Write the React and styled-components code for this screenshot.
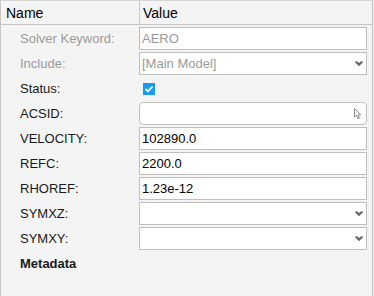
import React from "react";
import styled, { createGlobalStyle } from "styled-components";

const Global = createGlobalStyle`
  html, body { margin: 0; padding: 0; background: #f4f4f4; }
  body { font-family: "Liberation Sans", Arial, sans-serif; }
`;

const Panel = styled.div`
  box-sizing: border-box;
  width: 373px;
  height: 296px;
  background: #f4f4f4;
  border-left: 1px solid #c6c6c6;
  border-right: 1px solid #c0c0c0;
  border-top: 1px solid #d6d6d6;
  display: flex;
  flex-direction: column;
`;

const Header = styled.div`
  display: grid;
  grid-template-columns: 138px 1fr;
  height: 23px;
  border-bottom: 1px solid #c4c4c4;
`;

const HeaderCell = styled.div`
  display: flex;
  align-items: center;
  padding-left: ${(p) => p.$pad}px;
  font-size: 14px;
  color: #000;
  border-left: ${(p) => (p.$divider ? "1px solid #c8c8c8" : "none")};
`;

const Body = styled.div`
  display: grid;
  grid-template-columns: 138px 228px;
  grid-auto-rows: 23px;
  row-gap: 2px;
  padding-top: 2px;
`;

const Label = styled.div`
  display: flex;
  align-items: center;
  padding-left: 19px;
  font-size: 13px;
  font-weight: ${(p) => (p.$bold ? 700 : 400)};
  color: ${(p) => (p.$disabled ? "#9a9a9a" : "#1a1a1a")};
`;

const Field = styled.div`
  box-sizing: border-box;
  position: relative;
  height: 23px;
  background: #fff;
  border: 1px solid #bfbfbf;
  border-radius: ${(p) => (p.$rounded ? 4 : 0)}px;
  display: flex;
  align-items: center;
  padding-left: 2px;
  font-size: 13px;
  color: ${(p) => (p.$disabled ? "#9a9a9a" : "#000")};
`;

const FieldText = styled.span`
  flex: 1;
`;

const Adornment = styled.span`
  display: flex;
  align-items: center;
  margin-right: ${(p) => p.$mr}px;
`;

const CheckCell = styled.div`
  display: flex;
  align-items: center;
  padding-left: 4px;
`;

const Check = styled.div`
  width: 12px;
  height: 12px;
  background: #1a9be6;
  display: flex;
  align-items: center;
  justify-content: center;
`;

const Empty = styled.div``;

const Chevron = () => (
  <svg width="8" height="6" viewBox="0 0 8 6">
    <path d="M0.5 0.5 L4 4 L7.5 0.5" fill="none" stroke="#666" strokeWidth="1.6" />
    <path d="M2 1 L4 3 L6 1" fill="none" stroke="#666" strokeWidth="1.4" />
  </svg>
);

const Pointer = () => (
  <svg width="8" height="12" viewBox="0 0 8 12">
    <path
      d="M0.5 0.5 L0.5 9 L2.5 7.2 L4 10.8 L5.4 10.2 L4 6.8 L6.8 6.8 Z"
      fill="#fff"
      stroke="#8a8a8a"
      strokeWidth="1"
      strokeLinejoin="round"
    />
  </svg>
);

const Tick = () => (
  <svg width="10" height="8" viewBox="0 0 10 8">
    <path d="M1.5 4 L4 6.3 L8.5 1.5" fill="none" stroke="#fff" strokeWidth="1.8" />
  </svg>
);

const rows = [
  { label: "Solver Keyword:", disabled: true, type: "text", value: "AERO" },
  { label: "Include:", disabled: true, type: "select", value: "[Main Model]" },
  { label: "Status:", type: "check" },
  { label: "ACSID:", type: "picker", value: "" },
  { label: "VELOCITY:", type: "text", value: "102890.0" },
  { label: "REFC:", type: "text", value: "2200.0" },
  { label: "RHOREF:", type: "text", value: "1.23e-12" },
  { label: "SYMXZ:", type: "select", value: "" },
  { label: "SYMXY:", type: "select", value: "" },
];

function Value({ row }) {
  if (row.type === "check") {
    return (
      <CheckCell>
        <Check>
          <Tick />
        </Check>
      </CheckCell>
    );
  }
  return (
    <Field $disabled={row.disabled} $rounded={row.type === "picker"}>
      <FieldText>{row.value}</FieldText>
      {row.type === "select" && (
        <Adornment $mr={3}>
          <Chevron />
        </Adornment>
      )}
      {row.type === "picker" && (
        <Adornment $mr={4}>
          <Pointer />
        </Adornment>
      )}
    </Field>
  );
}

export default function App() {
  return (
    <>
      <Global />
      <Panel>
        <Header>
          <HeaderCell $pad={5}>Name</HeaderCell>
          <HeaderCell $pad={3} $divider>
            Value
          </HeaderCell>
        </Header>
        <Body>
          {rows.map((row) => (
            <React.Fragment key={row.label}>
              <Label $disabled={row.disabled}>{row.label}</Label>
              <Value row={row} />
            </React.Fragment>
          ))}
          <Label $bold>Metadata</Label>
          <Empty />
        </Body>
      </Panel>
    </>
  );
}
